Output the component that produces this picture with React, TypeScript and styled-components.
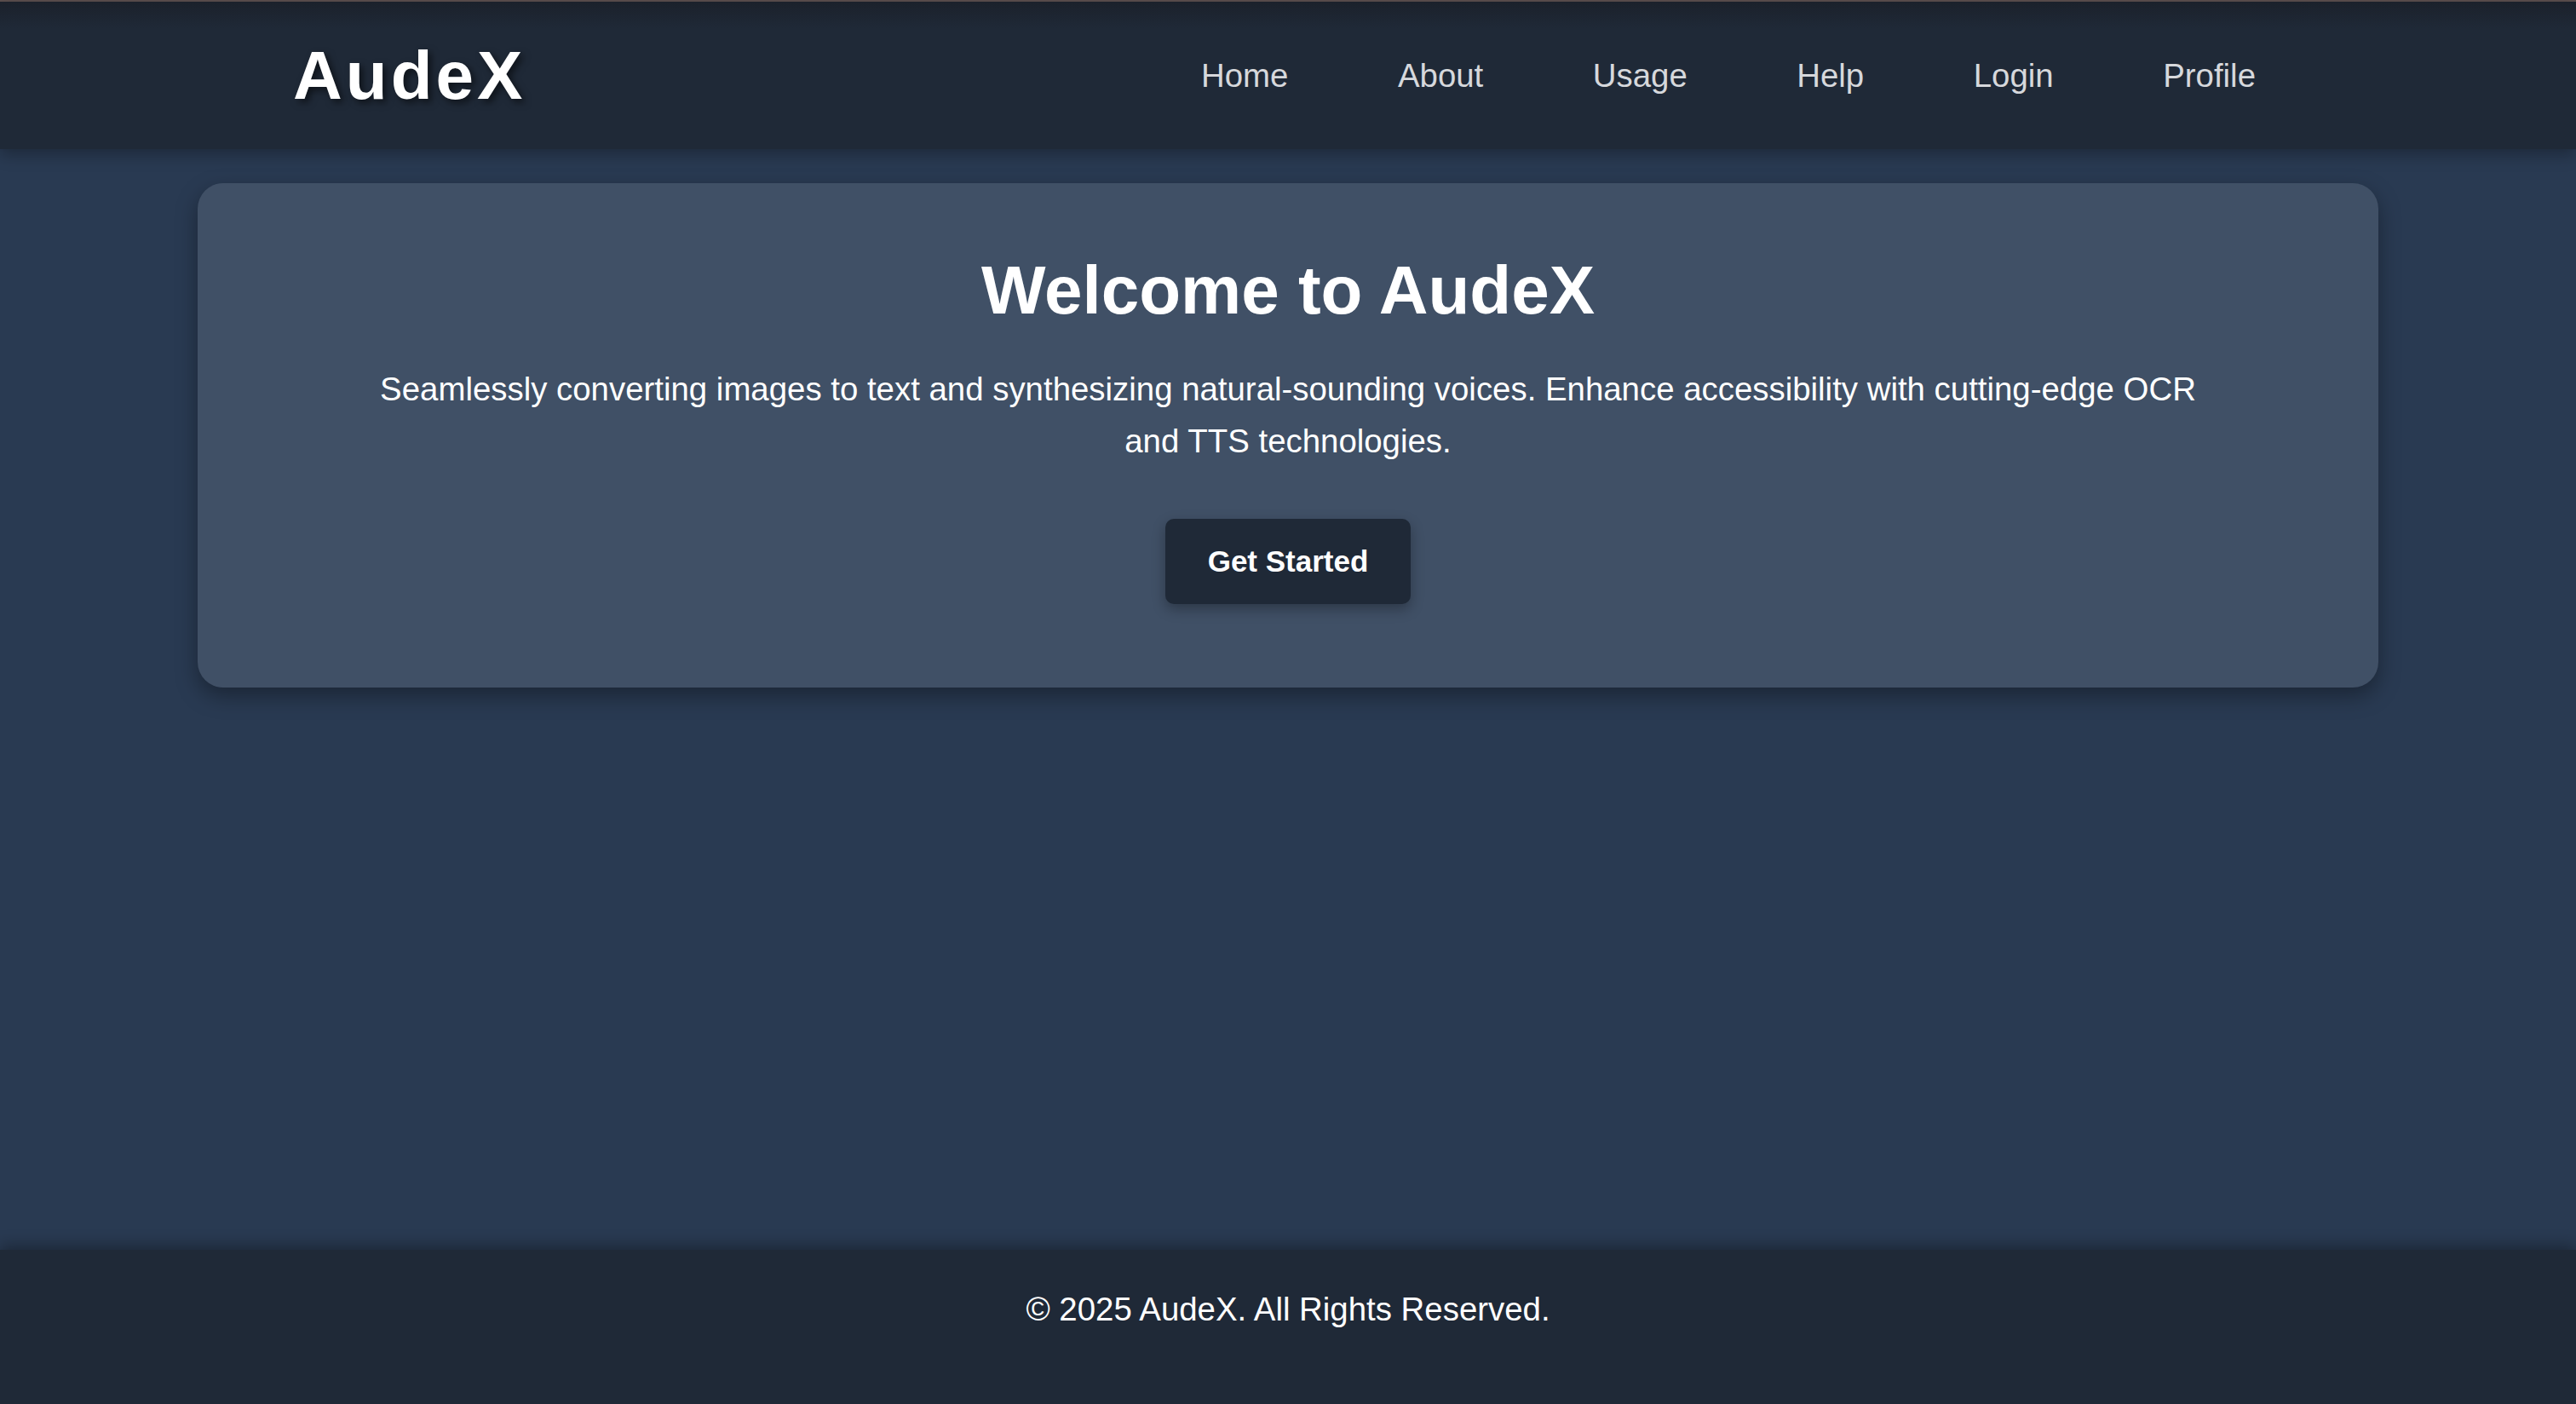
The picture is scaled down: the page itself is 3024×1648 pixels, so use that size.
import styled, { createGlobalStyle } from 'styled-components';

const GlobalStyle = createGlobalStyle`
  html, body {
    margin: 0;
    padding: 0;
  }
  body {
    background: #293a52;
    font-family: 'Liberation Sans', Arial, Helvetica, sans-serif;
    color: #ffffff;
  }
  * {
    box-sizing: border-box;
  }
`;

const Page = styled.div`
  min-height: 100vh;
  display: flex;
  flex-direction: column;
  border-top: 2px solid #5d504f;
`;

const Header = styled.header`
  height: 173px;
  display: flex;
  align-items: center;
  justify-content: space-between;
  padding: 0 344px;
  background: linear-gradient(#1b212b, #1f2937 18%);
  box-shadow: 0 6px 18px rgba(0, 0, 0, 0.3);
  position: relative;
  z-index: 2;
`;

const Logo = styled.div`
  font-size: 80px;
  font-weight: 700;
  letter-spacing: 4px;
  color: #ffffff;
  text-shadow: 4px 4px 8px rgba(0, 0, 0, 0.55);
`;

const Nav = styled.nav`
  display: flex;
  gap: 64.5px;
`;

const NavLink = styled.a`
  padding: 0 32px;
  font-size: 38.4px;
  color: #d6d8dc;
  text-decoration: none;
`;

const Main = styled.main`
  flex: 1;
  padding-top: 40px;
`;

const Hero = styled.section`
  margin: 0 232px;
  padding: 80px 0 98px;
  background: #405066;
  border-radius: 30px;
  box-shadow: 0 10px 26px rgba(0, 0, 0, 0.35);
  text-align: center;
`;

const Title = styled.h1`
  margin: 0 0 40px;
  font-size: 80px;
  font-weight: 700;
  color: #ffffff;
`;

const Lead = styled.p`
  max-width: 2175px;
  margin: 0 auto 61px;
  font-size: 38.4px;
  line-height: 1.58;
  color: #ffffff;
`;

const CtaButton = styled.button`
  display: inline-block;
  padding: 30px 50px;
  border: none;
  border-radius: 10px;
  background: #1f2937;
  color: #ffffff;
  font-family: inherit;
  font-size: 35px;
  font-weight: 700;
  box-shadow: 0 6px 16px rgba(0, 0, 0, 0.3);
  cursor: pointer;
`;

const Footer = styled.footer`
  padding: 48px 0 89px;
  background: #1f2937;
  box-shadow: 0 -6px 16px rgba(0, 0, 0, 0.3);
  text-align: center;
  font-size: 38.4px;
  color: #ffffff;
`;

const links = ['Home', 'About', 'Usage', 'Help', 'Login', 'Profile'];

export default function App() {
  return (
    <>
      <GlobalStyle />
      <Page>
        <Header>
          <Logo>AudeX</Logo>
          <Nav>
            {links.map((l) => (
              <NavLink key={l} href="#">
                {l}
              </NavLink>
            ))}
          </Nav>
        </Header>
        <Main>
          <Hero>
            <Title>Welcome to AudeX</Title>
            <Lead>
              Seamlessly converting images to text and synthesizing natural-sounding voices. Enhance
              accessibility with cutting-edge OCR and TTS technologies.
            </Lead>
            <CtaButton>Get Started</CtaButton>
          </Hero>
        </Main>
        <Footer>© 2025 AudeX. All Rights Reserved.</Footer>
      </Page>
    </>
  );
}
